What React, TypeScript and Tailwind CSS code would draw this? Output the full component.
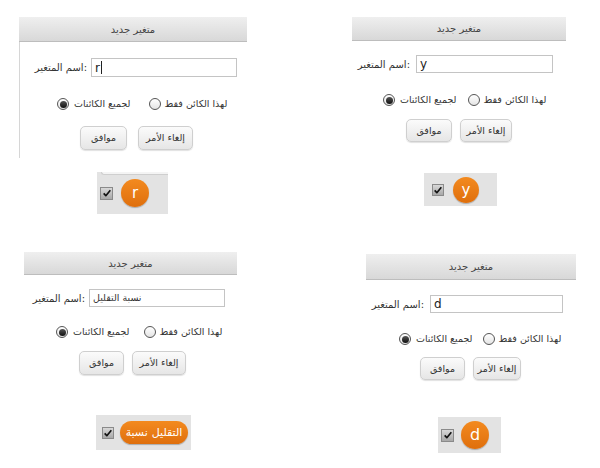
import React from "react";

const AR = { fontFamily: '"DejaVu Sans", "Noto Sans", sans-serif' };

function Radio({ on }: { on: boolean }) {
  return (
    <span className="flex h-[12px] w-[12px] shrink-0 items-center justify-center rounded-full border border-[#555] bg-linear-to-b from-white to-[#e4e4e4]">
      {on && <span className="h-[7px] w-[7px] rounded-full bg-linear-to-b from-[#555] to-[#111]" />}
    </span>
  );
}

function Check({ cls }: { cls: string }) {
  return (
    <span className={"flex shrink-0 items-center justify-center border border-[#8a8a8a] bg-linear-to-b from-[#d8d8d8] to-[#a8a8a8] " + cls}>
      <svg viewBox="0 0 12 12" className="h-[10px] w-[10px]">
        <path d="M2 6.5 L4.6 9.2 L10 2.6" fill="none" stroke="#111" strokeWidth="2" strokeLinejoin="round" />
      </svg>
    </span>
  );
}

type DP = {
  cell: string;
  title: string;
  body: string;
  inputRow: string;
  input: string;
  inputContent: React.ReactNode;
  radioRow: string;
  g1gap: string;
  btnRow: string;
  ok: string;
  cancel: string;
  monitor: React.ReactNode;
};

function Dialog(p: DP) {
  return (
    <div className={"flex flex-col items-start " + p.cell} style={AR}>
      <div className={"flex shrink-0 items-center justify-center border-b border-[#bdbdbd] bg-linear-to-b from-[#efefef] to-[#d8d8d8] text-[10px] text-[#444] " + p.title}>
        <span dir="rtl">متغير جديد</span>
      </div>
      <div className={"flex flex-col items-start " + p.body}>
        <div className={"flex w-full items-center justify-end " + p.inputRow}>
          <span className="whitespace-nowrap text-[10px] text-[#333]">اسم المتغير:</span>
          <div className={"flex items-center border border-[#c4c4c4] bg-white pl-[3px] text-[#222] " + p.input}>
            {p.inputContent}
          </div>
        </div>
        <div className={"flex items-center text-[9.5px] text-[#333] " + p.radioRow}>
          <div className={"flex items-center gap-[5px] " + p.g1gap}>
            <Radio on={true} />
            <span dir="rtl" className="whitespace-nowrap">لجميع الكائنات</span>
          </div>
          <div className="flex items-center gap-[4px]">
            <Radio on={false} />
            <span dir="rtl" className="whitespace-nowrap">لهذا الكائن فقط</span>
          </div>
        </div>
        <div className={"flex items-center text-[9.5px] text-[#333] " + p.btnRow}>
          <div className={"flex items-center justify-center rounded-[5px] border border-[#cfcfcf] bg-linear-to-b from-[#fbfbfb] to-[#e6e6e6] shadow-[0_1px_1px_rgba(0,0,0,0.12)] " + p.ok}>
            <span dir="rtl">موافق</span>
          </div>
          <div className={"flex items-center justify-center rounded-[5px] border border-[#cfcfcf] bg-linear-to-b from-[#fbfbfb] to-[#e6e6e6] shadow-[0_1px_1px_rgba(0,0,0,0.12)] " + p.cancel}>
            <span dir="rtl">إلغاء الأمر</span>
          </div>
        </div>
      </div>
      {p.monitor}
    </div>
  );
}

const orange = "flex shrink-0 items-center justify-center rounded-full bg-linear-to-b from-[#f38a1f] to-[#df6f0c] text-white shadow-[0_1px_1px_rgba(0,0,0,0.25)]";

export default function App() {
  return (
    <div className="grid h-[468px] w-[600px] grid-cols-[300px_300px] grid-rows-[240px_228px] bg-white">
      <Dialog
        cell="pl-[19px] pt-[17px]"
        title="w-[228px] h-[25px]"
        body="w-[228px] h-[116px] border-l border-[#d6d6d6]"
        inputRow="mt-[16px] pr-[10px] gap-[4px]"
        input="w-[146px] h-[19px] text-[12px]"
        inputContent={<><span>r</span><span className="ml-[1px] h-[13px] w-px bg-[#222]" /></>}
        radioRow="mt-[20px] ml-[37px]"
        g1gap="mr-[18px]"
        btnRow="mt-[15px] ml-[60px] gap-[11px]"
        ok="w-[47px] h-[24px]"
        cancel="w-[55px] h-[24px]"
        monitor={
          <div className="mt-[14px] ml-[78px] flex h-[42px] w-[71px] flex-col bg-[#e3e3e3]">
            <div className="ml-[4px] h-[3px] w-[67px] rounded-bl-[6px] border-b border-l border-[#cfcfcf] bg-[#f4f4f4]" />
            <div className="flex flex-1 items-center gap-[8px] pl-[3px] pb-[3px]">
              <Check cls="h-[13px] w-[13px]" />
              <div className={orange + " h-[28px] w-[28px] text-[15px] font-medium"}>r</div>
            </div>
          </div>
        }
      />
      <Dialog
        cell="pl-[52px] pt-[17px]"
        title="w-[214px] h-[24px]"
        body="w-[214px]"
        inputRow="mt-[14px] pr-[13px] gap-[6px]"
        input="w-[137px] h-[18px] text-[12px]"
        inputContent={<span>y</span>}
        radioRow="mt-[20px] ml-[31px]"
        g1gap="mr-[11px]"
        btnRow="mt-[12px] ml-[54px] gap-[8px]"
        ok="w-[46px] h-[23px]"
        cancel="w-[52px] h-[23px]"
        monitor={
          <div className="mt-[31px] ml-[72px] flex h-[33px] w-[73px] items-center gap-[9px] bg-[#e3e3e3] pl-[8px]">
            <Check cls="h-[12px] w-[12px]" />
            <div className={orange + " h-[26px] w-[26px] text-[15px] font-medium"}>y</div>
          </div>
        }
      />
      <Dialog
        cell="pl-[24px] pt-[12px]"
        title="w-[213px] h-[23px]"
        body="w-[213px]"
        inputRow="mt-[14px] pr-[12px] gap-[4px]"
        input="w-[136px] h-[18px] text-[9.5px]"
        inputContent={<span className="flex gap-[3px] text-[#333]"><span>التقليل</span><span>نسبة</span></span>}
        radioRow="mt-[18px] ml-[32px]"
        g1gap="mr-[14px]"
        btnRow="mt-[12px] ml-[55px] gap-[8px]"
        ok="w-[45px] h-[24px]"
        cancel="w-[54px] h-[24px]"
        monitor={
          <div className="mt-[40px] ml-[72px] flex h-[35px] w-[95px] items-center gap-[6px] bg-[#e3e3e3] pl-[6px]">
            <Check cls="h-[12px] w-[12px]" />
            <div className="flex h-[23px] w-[68px] items-center justify-center gap-[4px] rounded-full bg-linear-to-b from-[#f38a1f] to-[#df6f0c] text-[11px] text-white shadow-[0_1px_1px_rgba(0,0,0,0.25)]">
              <span>نسبة</span>
              <span>التقليل</span>
            </div>
          </div>
        }
      />
      <Dialog
        cell="pl-[66px] pt-[14px]"
        title="w-[210px] h-[26px]"
        body="w-[210px]"
        inputRow="mt-[15px] pr-[13px] gap-[6px]"
        input="w-[133px] h-[18px] text-[12px]"
        inputContent={<span>d</span>}
        radioRow="mt-[19px] ml-[33px]"
        g1gap="mr-[10px]"
        btnRow="mt-[11px] ml-[54px] gap-[8px]"
        ok="w-[45px] h-[23px]"
        cancel="w-[48px] h-[23px]"
        monitor={
          <div className="mt-[37px] ml-[72px] flex h-[36px] w-[63px] items-center gap-[7px] bg-[#e3e3e3] pl-[3px]">
            <Check cls="h-[13px] w-[13px]" />
            <div className={orange + " h-[28px] w-[28px] text-[16px] font-medium"}>d</div>
          </div>
        }
      />
    </div>
  );
}
